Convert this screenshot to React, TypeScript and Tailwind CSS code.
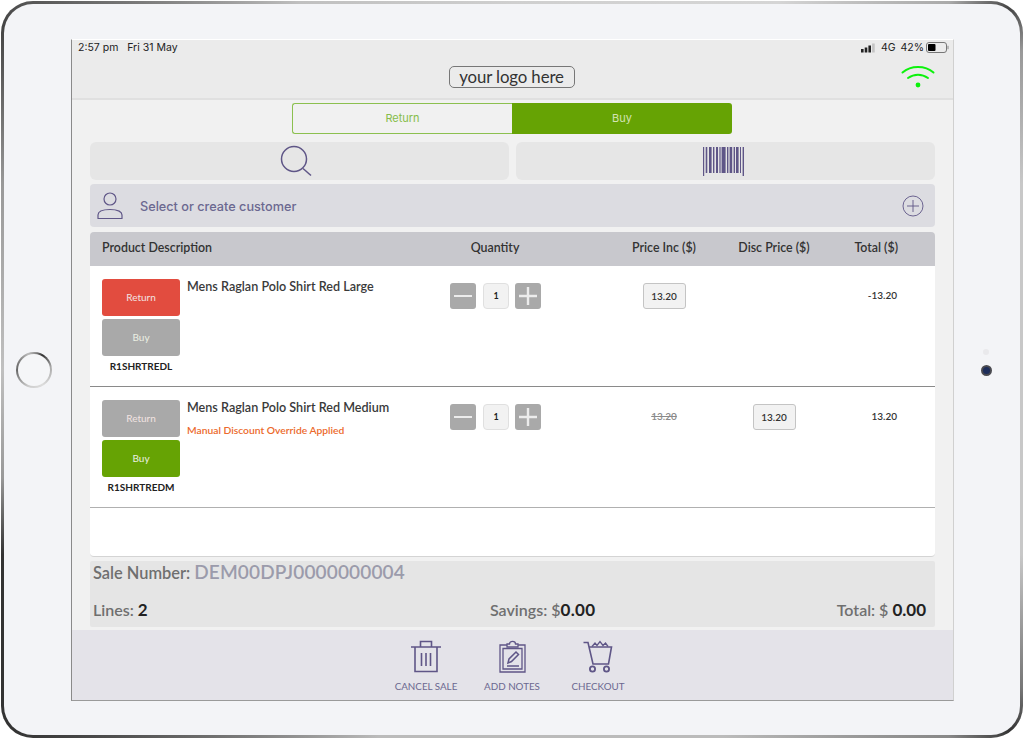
import React from "react";

const P = "#5f5687";

function Search() {
  return (
    <svg width="34" height="32" viewBox="0 0 34 32" fill="none" stroke={P} strokeWidth="1.5">
      <circle cx="15" cy="14" r="12.5" />
      <path d="M24 23.5L32 30.5" />
    </svg>
  );
}

function Barcode() {
  const bars: [number, number, number][] = [
    [0, 1.2, 29], [2.7, 1.6, 26], [6, 2.6, 26], [10, 1.4, 26], [13, 2, 26], [16.4, 1.2, 26], [18.6, 4, 26],
    [24, 1.4, 26], [26.6, 2.6, 26], [30.6, 1.4, 26], [33, 2.6, 26], [37, 1, 26], [39.6, 1.4, 29],
  ];
  return (
    <svg width="41" height="29" viewBox="0 0 41 29" fill={P}>
      {bars.map(([x, w, h]) => (
        <rect key={x} x={x} y="0" width={w} height={h} />
      ))}
    </svg>
  );
}

function Person() {
  return (
    <svg width="26" height="28" viewBox="0 0 26 28" fill="none" stroke={P} strokeWidth="1.2">
      <circle cx="13" cy="7" r="6" />
      <path d="M1 26.5V23C1 19.5 6 17.5 13 17.5S25 19.5 25 23V26.5Z" strokeLinejoin="round" />
    </svg>
  );
}

function PlusCircle() {
  return (
    <svg width="22" height="22" viewBox="0 0 22 22" fill="none" stroke={P} strokeWidth="0.9">
      <circle cx="11" cy="11" r="10" />
      <path d="M11 5V17M5 11H17" />
    </svg>
  );
}

function Wifi() {
  return (
    <svg width="34" height="26" viewBox="0 0 34 26" fill="none" stroke="#0cf20c" strokeWidth="2" strokeLinecap="round">
      <path d="M1.5 8.5C10 1 24 1 32.5 8.5" />
      <path d="M7 14C13 9.5 21 9.5 27 14" />
      <circle cx="17" cy="21" r="2.4" fill="#0cf20c" stroke="none" />
    </svg>
  );
}

function Signal() {
  return (
    <svg width="15" height="10" viewBox="0 0 15 10" fill="#222">
      <rect x="0" y="6" width="2.6" height="3.5" />
      <rect x="3.7" y="4.5" width="2.6" height="5" />
      <rect x="7.4" y="2.5" width="2.6" height="7" />
      <rect x="11.1" y="0.5" width="2.6" height="9" fill="#c4c4c4" />
    </svg>
  );
}

function Battery() {
  return (
    <svg width="23" height="11" viewBox="0 0 23 11">
      <rect x="0.5" y="0.5" width="20" height="10" rx="2.5" fill="none" stroke="#777" />
      <rect x="2" y="2" width="7.5" height="7" rx="1" fill="#000" />
      <path d="M22 3.8V7.2" stroke="#888" strokeWidth="1" />
    </svg>
  );
}

function Trash() {
  return (
    <svg width="32" height="33" viewBox="0 0 32 33" fill="none" stroke={P} strokeWidth="1.6">
      <path d="M1 7H31M10.5 7V1.5H21.5V7M5 7V31.5H27V7M11.5 13V26M16 13V26M20.5 13V26" />
    </svg>
  );
}

function Clipboard() {
  return (
    <svg width="27" height="33" viewBox="0 0 27 33" fill="none" stroke={P} strokeWidth="1.3">
      <path d="M8 5H1V32H26V5H19" />
      <path d="M4 8.5H23V29H4Z" />
      <path d="M8 7V4H10.5C10.5 0.5 16.5 0.5 16.5 4H19V7Z" />
      <path d="M9 23L10 19L17 12L19.5 14.5L12.5 21.5Z" strokeWidth="1.5" />
      <path d="M8 26H20" strokeWidth="1.5" />
    </svg>
  );
}

function Cart() {
  return (
    <svg width="30" height="33" viewBox="0 0 30 33" fill="none" stroke={P} strokeWidth="1.6">
      <path d="M0.5 2.5H5L10 24H25.5L28.5 7H6" />
      <path d="M9 6.5L12 3L14 5.5L17 1.5L20 5.5L22.5 3L25 6.5" strokeWidth="1.3" />
      <circle cx="9.5" cy="29" r="2.6" strokeWidth="1.8" />
      <circle cx="23.5" cy="29" r="2.6" strokeWidth="1.8" />
    </svg>
  );
}

function Qty() {
  return (
    <div className="flex w-[110px] pl-[10px] pt-[17px]">
      <div className="flex h-[26px] w-[26px] items-center justify-center rounded-[3px] bg-[#a9a9a9]">
        <div className="h-[2.5px] w-[18px] bg-[#ececec]" />
      </div>
      <div className="ml-[7px] flex h-[26px] w-[26px] items-center justify-center rounded-[4px] border border-[#e0e0e0] bg-[#f2f2f2] text-[9px] font-bold text-[#222]">
        1
      </div>
      <div className="ml-[6px] flex h-[26px] w-[26px] items-center justify-center rounded-[3px] bg-[#a9a9a9]">
        <svg width="20" height="20" viewBox="0 0 20 20" stroke="#ececec" strokeWidth="2.4">
          <path d="M10 1V19M1 10H19" />
        </svg>
      </div>
    </div>
  );
}

function PriceBox() {
  return (
    <div className="flex h-[26px] w-[43px] items-center justify-center rounded-[3px] border border-[#c4c4c4] bg-[#f2f2f2] text-[10px] font-semibold text-[#333]">
      13.20
    </div>
  );
}

function Row({
  name,
  sku,
  returnActive,
  note,
  border,
  children,
}: {
  name: string;
  sku: string;
  returnActive: boolean;
  note?: string;
  border: string;
  children: React.ReactNode;
}) {
  return (
    <div className={`flex h-[121px] border-b ${border}`}>
      <div className="flex w-[350px] pl-3 pt-[13px]">
        <div className="flex w-[78px] flex-col gap-[3px]">
          <div
            className={`flex h-[37px] items-center justify-center rounded-[3px] text-[10px] text-[#f2e4e2] ${
              returnActive ? "bg-[#e24c3f]" : "bg-[#a9a9a9]"
            }`}
          >
            Return
          </div>
          <div
            className={`flex h-[37px] items-center justify-center rounded-[3px] text-[10px] text-[#ecf0e4] ${
              returnActive ? "bg-[#a9a9a9]" : "bg-[#66a304]"
            }`}
          >
            Buy
          </div>
          <div className="mt-[1px] whitespace-nowrap text-center text-[10px] leading-[13px] font-bold text-[#222]">
            {sku}
          </div>
        </div>
        <div className="pl-[7px] pt-[1px]">
          <div className="whitespace-nowrap text-[12.6px] leading-[14px] font-semibold text-[#3a3a3a]">{name}</div>
          {note && <div className="mt-[9px] text-[10.3px] leading-[12px] font-semibold text-[#ec6a2c]">{note}</div>}
        </div>
      </div>
      {children}
    </div>
  );
}

export default function App() {
  return (
    <div
      className="h-[739px] w-[1024px] overflow-hidden bg-white p-[1px] text-[#333]"
      style={{ fontFamily: '"Lato", "Open Sans", sans-serif' }}
    >
      <div className="h-[737px] w-[1022px] rounded-[32px] bg-[conic-gradient(#cfcfcf_0deg,#d5d5d5_36deg,#aaa_50deg,#444_54deg,#999_58deg,#c8c8c8_70deg,#c8c8c8_110deg,#777_122deg,#333_126deg,#888_130deg,#bbb_150deg,#bbb_200deg,#555_226deg,#333_234deg,#333_250deg,#999_258deg,#c0c0c0_270deg,#999_290deg,#444_304deg,#666_310deg,#c0c0c0_330deg,#cfcfcf_360deg)] p-[3px]">
        <div className="relative h-[731px] w-[1016px] rounded-[29px] bg-[#f3f4f7] pl-[67px] pt-[35px]">
          <div className="absolute left-[12px] top-[348px] h-[36px] w-[36px] rounded-full bg-[conic-gradient(#999_0deg,#333_30deg,#aaa_80deg,#ddd_150deg,#ccc_200deg,#666_270deg,#888_310deg,#bbb_340deg,#999_360deg)] p-[2px]">
            <div className="h-full w-full rounded-full bg-[#f5f6f8]" />
          </div>
          <div className="absolute left-[979px] top-[345px] h-[6px] w-[6px] rounded-full bg-[#e9e9ec]" />
          <div className="absolute left-[977px] top-[361px] h-[11px] w-[11px] rounded-full border-2 border-[#4a4a50] bg-[#1d2d5a]" />

          <div className="flex h-[662px] w-[883px] flex-col border-b border-l border-r border-t border-b-[#9a9a9a] border-l-[#8a8a8a] border-r-[#d0d0d0] border-t-white bg-[#f1f1f1]">
            <div className="relative h-[60px] shrink-0 border-b-2 border-[#e0e0e0] bg-[#ebebeb]">
              <div
                className="flex h-[14px] items-center justify-between pl-[6px] pr-[4px] pt-[1px] text-[10.5px] text-[#222]"
                style={{ fontFamily: '"Inter", sans-serif' }}
              >
                <span className="whitespace-pre">2:57 pm   Fri 31 May</span>
                <span className="flex items-center">
                  <Signal />
                  <span className="ml-[5px]">4G</span>
                  <span className="ml-[5px]">42%</span>
                  <span className="ml-[2px]">
                    <Battery />
                  </span>
                </span>
              </div>
              <div className="flex justify-center pr-[2px] pt-[12px]">
                <div className="flex h-[22px] w-[126px] items-center justify-center rounded-[5px] border border-[#777] pb-[1px] text-[16.8px] tracking-[-0.1px] text-[#333]">
                  your logo here
                </div>
              </div>
              <div className="absolute left-[829px] top-[24px]">
                <Wifi />
              </div>
            </div>

            <div className="flex flex-1 flex-col px-[18px]">
              <div
                className="mt-[3px] flex h-[31px] justify-center pr-[1px] text-[11px]"
                style={{ fontFamily: '"Inter", sans-serif' }}
              >
                <div className="flex w-[220px] items-center justify-center rounded-l-[3px] border border-r-0 border-[#8cc04f] bg-[#f1f1f1] text-[#86bd4a]">
                  Return
                </div>
                <div className="flex w-[220px] items-center justify-center rounded-r-[3px] bg-[#66a304] text-[#d4e3b4]">
                  Buy
                </div>
              </div>

              <div className="mt-[8px] flex h-[38px] gap-[7px]">
                <div className="flex w-[419px] items-center justify-center rounded-[6px] bg-[#e6e6e6] pr-[8px]">
                  <Search />
                </div>
                <div className="flex w-[419px] items-center justify-center rounded-[6px] bg-[#e6e6e6] pr-[4px]">
                  <Barcode />
                </div>
              </div>

              <div className="mt-[4px] flex h-[43px] items-center rounded-[4px] bg-[#dcdce1] pl-[7px] pr-[11px]">
                <Person />
                <span
                  className="ml-[17px] flex-1 pt-[2px] text-[12.7px] font-medium text-[#6b6890]"
                  style={{ fontFamily: '"Inter", sans-serif' }}
                >
                  Select or create customer
                </span>
                <PlusCircle />
              </div>

              <div className="mt-[5px] flex h-[34px] items-center rounded-t-[4px] bg-[#c8c8cd] pb-[1px] text-[12.4px] font-semibold text-[#333]">
                <div className="w-[350px] pl-3">Product Description</div>
                <div className="w-[110px] text-center">Quantity</div>
                <div className="ml-[64px] w-[100px] whitespace-nowrap text-center">Price Inc ($)</div>
                <div className="w-[120px] whitespace-nowrap text-center">Disc Price ($)</div>
                <div className="w-[64px] whitespace-nowrap text-right">Total ($)</div>
              </div>

              <div className="h-[291px] rounded-b-[4px] border-b border-[#d4d4d4] bg-white">
                <Row name="Mens Raglan Polo Shirt Red Large" sku="R1SHRTREDL" returnActive border="border-[#8a8a8a]">
                  <Qty />
                  <div className="ml-[64px] flex w-[100px] justify-center pt-[17px]">
                    <PriceBox />
                  </div>
                  <div className="w-[120px]" />
                  <div className="w-[64px] pr-[1px] pt-[22px] text-right text-[10px] leading-[14px] font-semibold text-[#333]">
                    -13.20
                  </div>
                </Row>
                <Row
                  name="Mens Raglan Polo Shirt Red Medium"
                  sku="R1SHRTREDM"
                  returnActive={false}
                  note="Manual Discount Override Applied"
                  border="border-[#b0b0b0]"
                >
                  <Qty />
                  <div className="ml-[64px] w-[100px] pt-[22px] text-center text-[10px] leading-[14px] font-semibold text-[#8a8a8a] line-through">
                    13.20
                  </div>
                  <div className="flex w-[120px] justify-center pt-[17px]">
                    <PriceBox />
                  </div>
                  <div className="w-[64px] pr-[1px] pt-[22px] text-right text-[10px] leading-[14px] font-semibold text-[#333]">
                    13.20
                  </div>
                </Row>
              </div>

              <div className="mt-[4px] flex h-[66px] flex-col justify-between rounded-[2px] bg-[#e5e5e5] pb-[7px] pl-[3px] pr-[9px] font-semibold text-[#6f6f6f]">
                <div className="flex items-baseline gap-[4px] text-[16.4px] leading-[22px]">
                  <span>Sale Number:</span>
                  <span className="text-[19px] tracking-[0.15px] text-[#9b9bab]">DEM00DPJ0000000004</span>
                </div>
                <div className="flex items-baseline text-[16px] leading-[20px]">
                  <div className="w-[397px]">
                    Lines: <span className="text-[17px] font-bold text-[#222]">2</span>
                  </div>
                  <div className="flex-1 whitespace-nowrap">
                    Savings: $<span className="text-[17px] font-bold tracking-[0.3px] text-[#222]">0.00</span>
                  </div>
                  <div className="whitespace-pre">
                    Total: $ <span className="text-[17px] font-bold text-[#222]">0.00</span>
                  </div>
                </div>
              </div>
            </div>

            <div className="mt-[3px] flex h-[70px] shrink-0 justify-center bg-[#e4e3e9] pt-[10px] pr-[1px] text-[9.8px] text-[#6b6890]">
              <div className="flex w-[86px] flex-col items-center">
                <Trash />
                <span className="mt-[6px] whitespace-nowrap">CANCEL SALE</span>
              </div>
              <div className="flex w-[86px] flex-col items-center">
                <Clipboard />
                <span className="mt-[6px] whitespace-nowrap">ADD NOTES</span>
              </div>
              <div className="flex w-[86px] flex-col items-center">
                <Cart />
                <span className="mt-[6px] whitespace-nowrap">CHECKOUT</span>
              </div>
            </div>
          </div>
        </div>
      </div>
    </div>
  );
}
